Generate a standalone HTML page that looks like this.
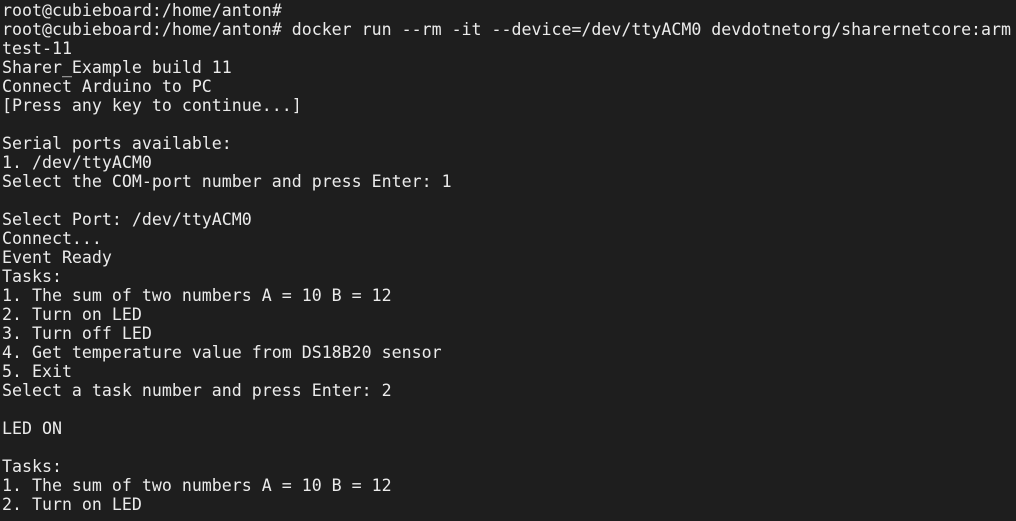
<!DOCTYPE html>
<html><head><meta charset="utf-8"><style>
html,body{margin:0;padding:0;background:#1e1e1e;width:1016px;height:521px;overflow:hidden}
pre{margin:0;padding:1px 0 0 2px;font-family:"DejaVu Sans Mono","Liberation Mono",monospace;font-size:16.6px;line-height:19px;color:#ebebeb;white-space:pre}
</style></head><body><pre>root@cubieboard:/home/anton#
root@cubieboard:/home/anton# docker run --rm -it --device=/dev/ttyACM0 devdotnetorg/sharernetcore:arm
test-11
Sharer_Example build 11
Connect Arduino to PC
[Press any key to continue...]

Serial ports available:
1. /dev/ttyACM0
Select the COM-port number and press Enter: 1

Select Port: /dev/ttyACM0
Connect...
Event Ready
Tasks:
1. The sum of two numbers A = 10 B = 12
2. Turn on LED
3. Turn off LED
4. Get temperature value from DS18B20 sensor
5. Exit
Select a task number and press Enter: 2

LED ON

Tasks:
1. The sum of two numbers A = 10 B = 12
2. Turn on LED</pre></body></html>
